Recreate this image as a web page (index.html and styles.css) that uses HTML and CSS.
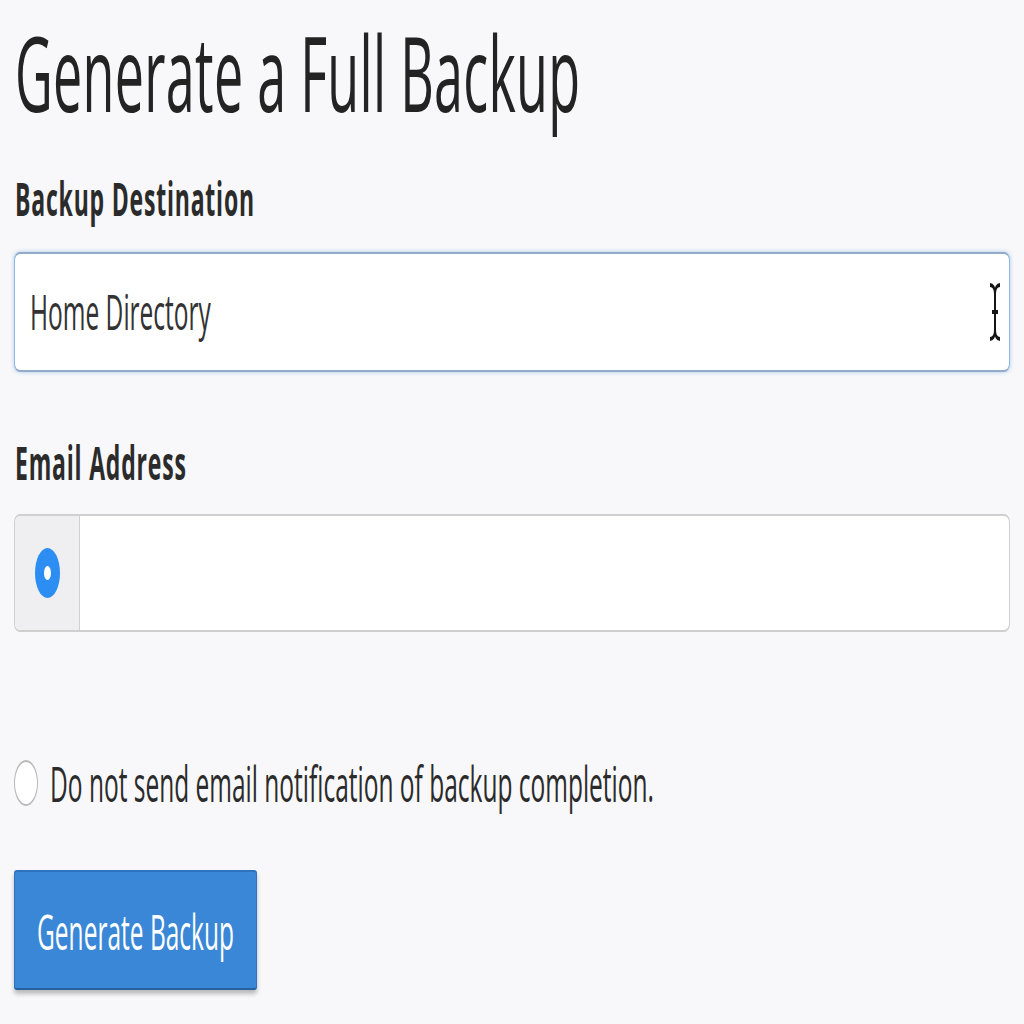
FILE: index.html
```html
<html>
<head>
<meta http-equiv="Content-Type" content="text/html;charset=UTF-8">
<title>Generate a Full Backup</title>
<link rel="stylesheet" href="styles.css">
</head>
<body>
<div class="page">
  <h1 class="title">Generate a Full Backup</h1>
  <form class="backupForm" onsubmit="return false;">
    <label class="fieldLabel labelDest">Backup Destination</label>
    <div class="selectBox">
      <span class="selectText">Home Directory</span>
      <svg class="ibeam" width="12" height="30" viewBox="0 0 24 60" preserveAspectRatio="none">
        <path d="M2 3 C8 3 12 6 12 12 C12 6 16 3 22 3 M12 12 V48 M2 57 C8 57 12 54 12 48 C12 54 16 57 22 57 M6 30 H18" stroke="#151515" stroke-width="4" fill="none"/>
      </svg>
    </div>

    <label class="fieldLabel labelEmail">Email Address</label>
    <div class="inputGroup">
      <span class="addon"><span class="dotRadio"></span></span>
      <input class="emailInput" type="text" name="email">
    </div>

    <label class="radioRow">
      <span class="radio"></span>
      <span class="radioText">Do not send email notification of backup completion.</span>
    </label>

    <button class="btnPrimary" type="button">Generate Backup</button>
  </form>
</div>
</body>
</html>
```

FILE: styles.css
```css
body {
    margin: 0px;
    padding: 0px;
    background-color: #f8f8fa;
    overflow: hidden;
    font-family: "Open Sans", "Noto Sans", sans-serif;
    color: #2b2b2b;
}

/* the shot is stretched to double height, so lay out at half height and stretch back */
.page {
    width: 1024px;
    box-sizing: border-box;
    padding: 6px 14px 0 14px;
    transform: scaleY(2);
    transform-origin: 0 0;
}

.title {
    margin: 0px;
    padding-left: 1px;
    font-size: 52px;
    line-height: 60px;
    font-weight: 400;
    letter-spacing: 0.3px;
    color: #232323;
}

.backupForm {
    display: flex;
    flex-direction: column;
    align-items: flex-start;
    margin: 0px;
}

.fieldLabel {
    display: block;
    padding-left: 1px;
    font-size: 23px;
    line-height: 25px;
    font-weight: 700;
    letter-spacing: 0.8px;
    color: #2b2b2b;
}
.labelDest { margin-top: 21px; }
.labelEmail { margin-top: 33px; }

.selectBox {
    position: relative;
    display: flex;
    align-items: center;
    box-sizing: border-box;
    width: 100%;
    height: 60px;
    margin-top: 13.5px;
    padding-left: 15px;
    background-color: #fff;
    border: 1px solid #8fb8e4;
    border-top-color: #93abc8;
    border-bottom-color: #93abc8;
    border-radius: 6px / 4px;
    box-shadow: 0 0 3px rgba(102, 160, 225, 0.55);
}
.selectText {
    font-size: 24.5px;
    line-height: 30px;
    color: #333;
}
.ibeam {
    position: absolute;
    right: 8px;
    top: 14px;
}

.inputGroup {
    display: flex;
    box-sizing: border-box;
    width: 100%;
    height: 59.5px;
    margin-top: 13px;
    background-color: #fff;
    border: 1px solid #cfcfcf;
    border-radius: 6px / 4px;
    overflow: hidden;
}
.addon {
    display: flex;
    align-items: center;
    justify-content: center;
    width: 64px;
    background-color: #efeff1;
    border-right: 1.5px solid #d0d0d0;
}
.dotRadio {
    display: flex;
    align-items: center;
    justify-content: center;
    width: 25px;
    height: 25px;
    border-radius: 50%;
    background-color: #2c8ef2;
}
.dotRadio::after {
    content: "";
    width: 7px;
    height: 7px;
    border-radius: 50%;
    background-color: #fff;
}
.emailInput {
    flex: 1;
    border: 0px;
    padding: 0px;
    outline: none;
    background: transparent;
}

.radioRow {
    display: flex;
    align-items: center;
    height: 30px;
    margin-top: 60.5px;
}
.radio {
    box-sizing: border-box;
    width: 24px;
    height: 23px;
    border-radius: 50%;
    background-color: #fff;
    border: 1.5px solid #b8b8b8;
    border-top-width: 1px;
    border-bottom-width: 1px;
}
.radioText {
    margin-left: 12px;
    font-size: 24.5px;
    line-height: 30px;
    color: #2b2b2b;
}

.btnPrimary {
    box-sizing: border-box;
    width: 243px;
    height: 60px;
    margin-top: 28.5px;
    padding: 0px;
    font-family: "Open Sans", "Noto Sans", sans-serif;
    font-size: 24.5px;
    color: #fff;
    background-color: #3a87d7;
    border: 1.5px solid #2f72bd;
    border-top-width: 1px;
    border-bottom-width: 1px;
    border-bottom-color: #25609f;
    border-radius: 3px / 1.5px;
    box-shadow: 0 2px 3px rgba(0, 0, 0, 0.25);
}
```
